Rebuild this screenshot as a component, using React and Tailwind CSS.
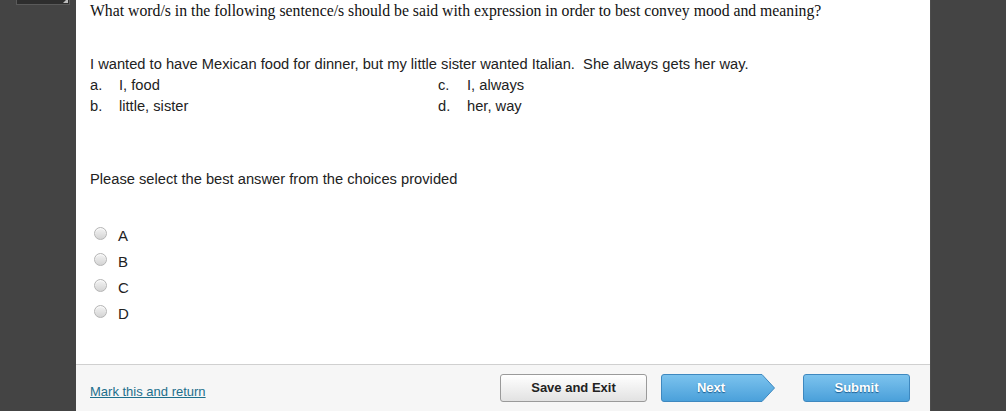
import React from 'react';

const options = [
  ['a.', 'I, food', 'c.', 'I, always'],
  ['b.', 'little, sister', 'd.', 'her, way'],
];

const choices = ['A', 'B', 'C', 'D'];

function Radio() {
  return (
    <span className="inline-block w-[13px] h-[13px] rounded-full border border-[#b5b5b5] bg-gradient-to-b from-[#f4f4f4] to-[#d4d4d4] shadow-[inset_0_1px_1px_rgba(255,255,255,0.8)]" />
  );
}

export default function App() {
  return (
    <div className="w-full h-[411px] flex bg-[#444444] overflow-hidden font-['Liberation_Sans',Arial,sans-serif]">
      <div className="w-[76px] shrink-0">
        <div className="relative ml-[16px] w-[54px] h-[5px] bg-[#2e2e2e] border-x border-b border-[#5a5a5a]">
          <span className="absolute right-[1px] bottom-[1px] w-0 h-0 border-l-[5px] border-l-transparent border-b-[5px] border-b-[#bdbdbd]" />
        </div>
      </div>

      <div className="w-[854px] shrink-0 bg-white flex flex-col">
        <div className="flex-1 pl-[14px] text-[#222]">
          <p className="font-['Liberation_Serif','Times_New_Roman',serif] text-[15.75px] leading-[22px] text-[#111]">
            What word/s in the following sentence/s should be said with expression in order to best convey mood and meaning?
          </p>

          <p className="mt-[32px] text-[14.7px] leading-[21px]">
            I wanted to have Mexican food for dinner, but my little sister wanted Italian.&nbsp; She always gets her way.
          </p>
          {options.map(([l1, t1, l2, t2]) => (
            <div key={l1} className="flex text-[14.7px] leading-[21px]">
              <span className="w-[29px]">{l1}</span>
              <span className="w-[319px]">{t1}</span>
              <span className="w-[29px]">{l2}</span>
              <span>{t2}</span>
            </div>
          ))}

          <p className="mt-[52px] text-[14.7px] leading-[21px]">
            Please select the best answer from the choices provided
          </p>

          <div className="mt-[33px] flex flex-col">
            {choices.map((c) => (
              <label key={c} className="flex items-center h-[26px] text-[15px]">
                <span className="w-[20px] flex justify-center -mt-[5px]">
                  <Radio />
                </span>
                <span className="ml-[8px]">{c}</span>
              </label>
            ))}
          </div>
        </div>

        <div className="h-[47px] shrink-0 border-t border-[#d0d0d0] bg-[#f6f6f6] flex items-center pl-[14px] pr-[20px]">
          <a href="#" className="mt-[7px] text-[13px] text-[#1d6f8c] underline">
            Mark this and return
          </a>
          <div className="ml-auto flex items-center mt-[-1px]">
            <button className="w-[147px] h-[28px] rounded-[3px] border border-[#9a9a9a] bg-gradient-to-b from-[#ffffff] to-[#e2e2e2] text-[13px] font-bold text-[#222]">
              Save and Exit
            </button>
            <button className="relative ml-[14px] w-[114px] h-[28px] text-[13px] font-bold text-white [text-shadow:0_1px_1px_rgba(0,60,110,0.7)]">
              <svg className="absolute inset-0" width="114" height="28" viewBox="0 0 114 28">
                <defs>
                  <linearGradient id="nextg" x1="0" y1="0" x2="0" y2="1">
                    <stop offset="0" stopColor="#7cc3ee" />
                    <stop offset="1" stopColor="#4aa0da" />
                  </linearGradient>
                </defs>
                <path d="M3 0.5 H101 L113.5 14 L101 27.5 H3 Q0.5 27.5 0.5 25 V3 Q0.5 0.5 3 0.5 Z" fill="url(#nextg)" stroke="#3e88bf" />
              </svg>
              <span className="relative pr-[14px]">Next</span>
            </button>
            <button className="ml-[28px] w-[107px] h-[28px] rounded-[3px] border border-[#3e88bf] bg-gradient-to-b from-[#7cc3ee] to-[#4aa0da] text-[13px] font-bold text-white [text-shadow:0_1px_1px_rgba(0,60,110,0.7)]">
              Submit
            </button>
          </div>
        </div>
      </div>

      <div className="flex-1 border-l border-[#4c4c4c]" />
    </div>
  );
}
